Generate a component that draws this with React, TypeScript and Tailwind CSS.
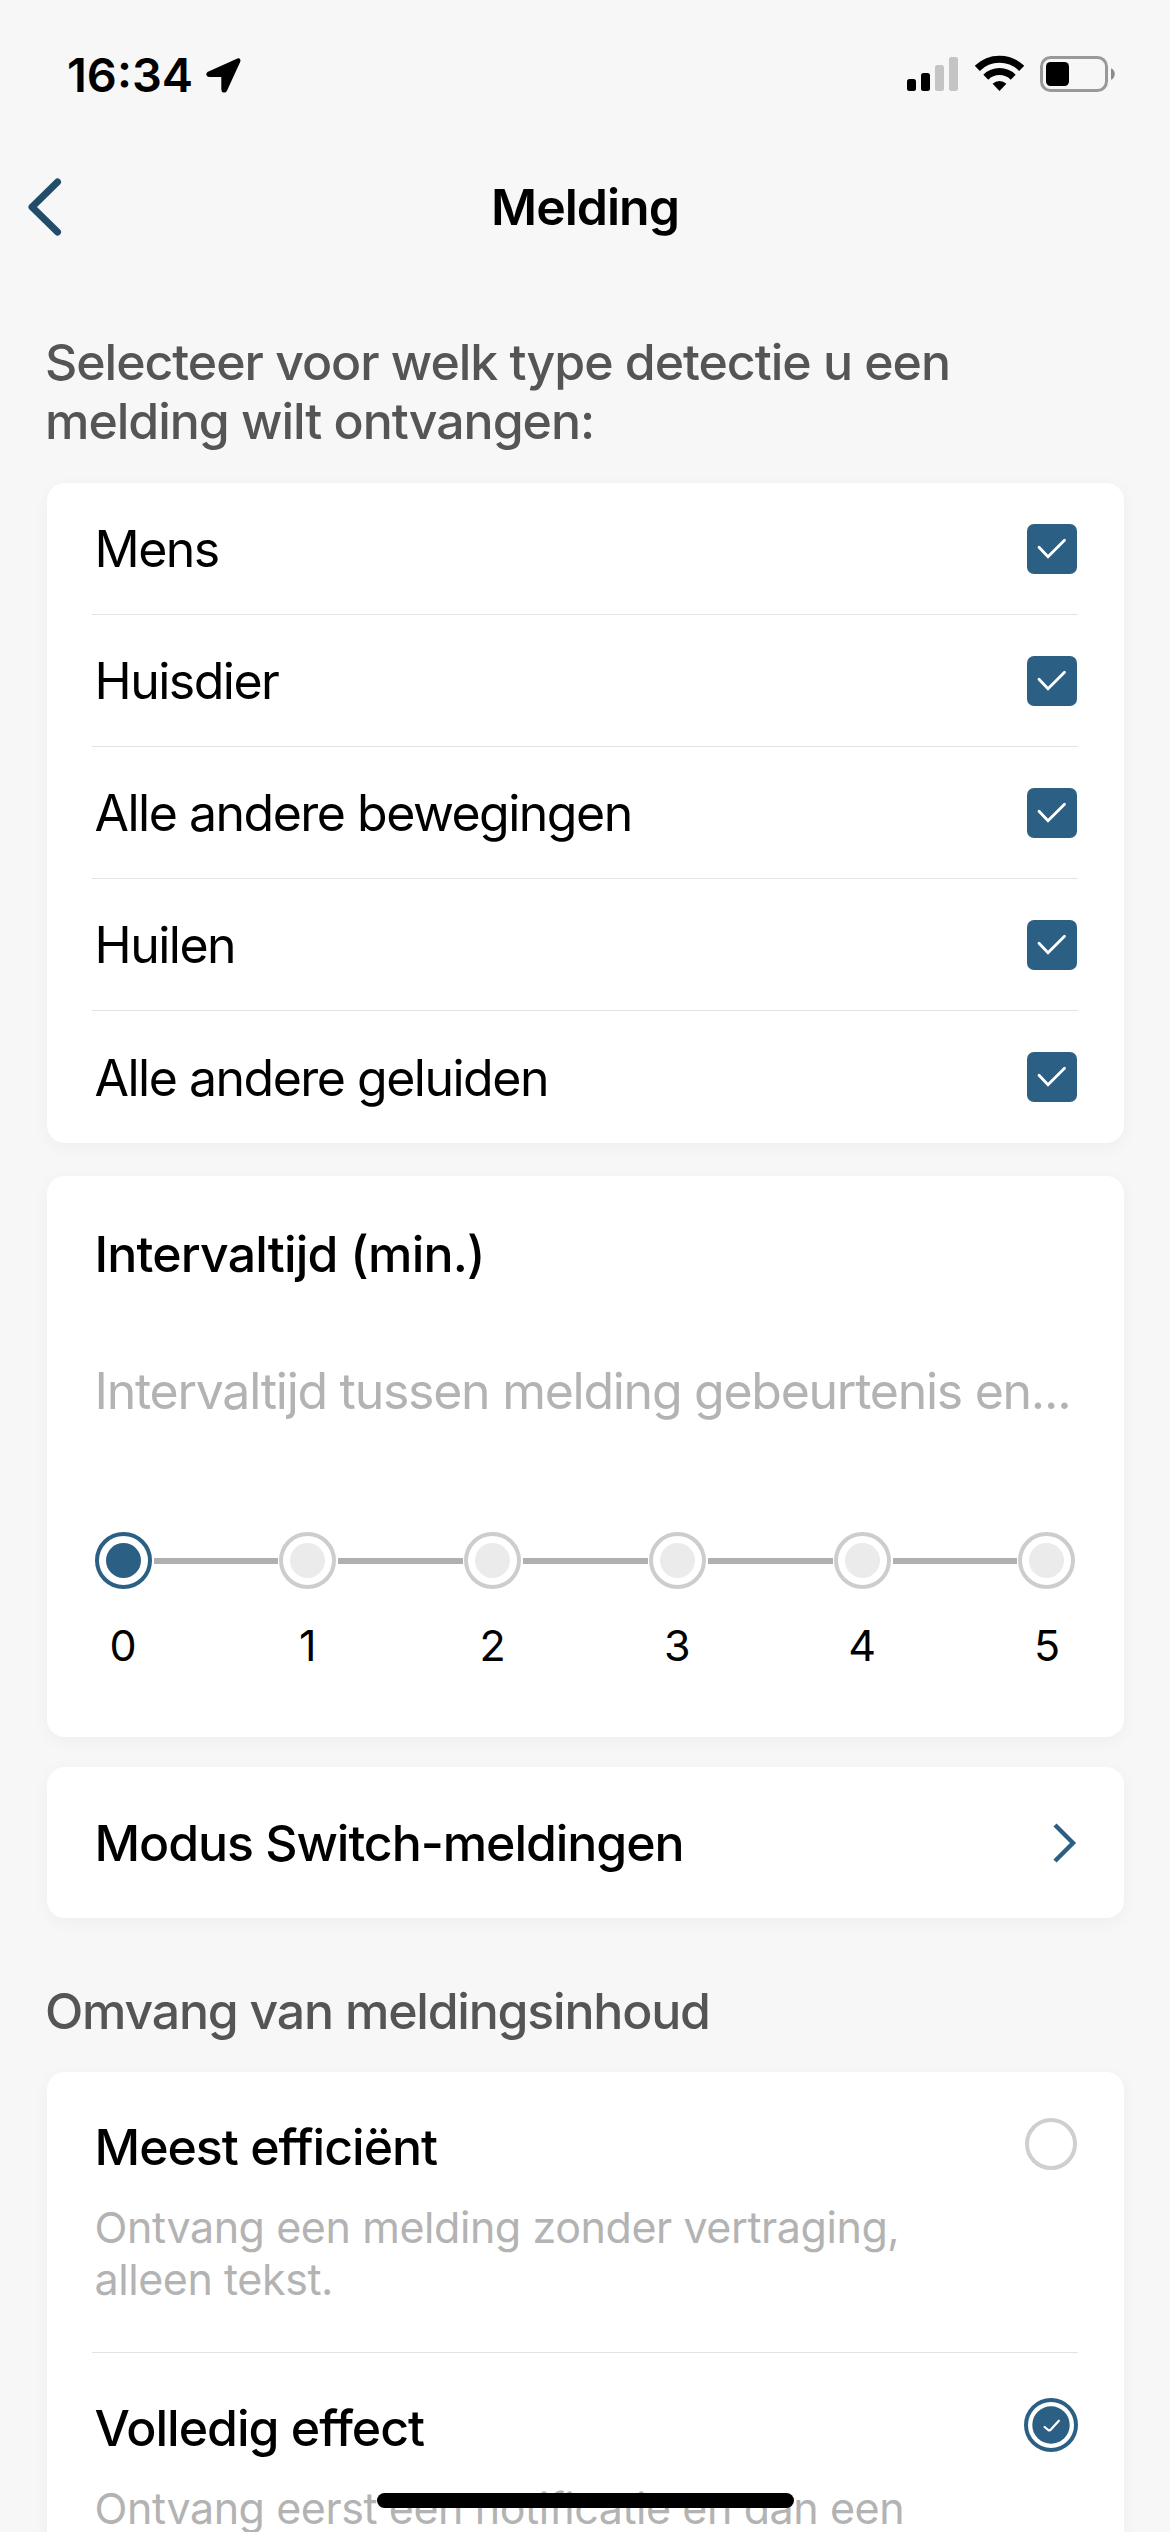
import type { ReactNode } from "react";

const detections = ["Mens", "Huisdier", "Alle andere bewegingen", "Huilen", "Alle andere geluiden"];
const minutes = [0, 1, 2, 3, 4, 5];

function StatusBar() {
    return (
        <div className="flex h-[148px] items-center pl-[67px] pr-[54px]">
            <span className="text-[47px] font-semibold leading-none">16:34</span>
            <svg className="ml-[12px] mt-[2px]" width="37" height="37" viewBox="0 0 37 37">
                <path d="M33 2.9 L3.6 16 C2.2 16.9 2.6 18.5 4 18.5 H17.8 V32.4 C17.8 34.2 19.8 34.6 20.6 33 L33.8 4.3 C34.3 3.1 33.8 2.6 33 2.9 Z" fill="#000" stroke="#000" strokeWidth="3" strokeLinejoin="round" />
            </svg>
            <div className="ml-auto flex items-center">
                <div className="flex h-[34px] items-end gap-[5px]">
                    <div className="h-3 w-[9px] rounded-[2.5px] bg-black" />
                    <div className="h-[18px] w-[9px] rounded-[2.5px] bg-black" />
                    <div className="h-[26px] w-[9px] rounded-[2.5px] bg-[#c4c4c4]" />
                    <div className="h-[34px] w-[9px] rounded-[2.5px] bg-[#c4c4c4]" />
                </div>
                <svg className="-mt-[2px] ml-[17px]" width="49" height="36" viewBox="0 0 49 36">
                    <path d="M2.3 13.4 A31.5 31.5 0 0 1 46.7 13.4" fill="none" stroke="#000" strokeWidth="7.2" />
                    <path d="M10.8 22.2 A19.6 19.6 0 0 1 38.2 22.2" fill="none" stroke="#000" strokeWidth="7" />
                    <path d="M24.5 36 L17.6 28.8 A9.7 9.7 0 0 1 31.4 28.8 Z" fill="#000" />
                </svg>
                <svg className="ml-[16px]" width="76" height="36" viewBox="0 0 76 36">
                    <rect x="1.5" y="1.5" width="65" height="33" rx="9" fill="none" stroke="#999" strokeWidth="3" />
                    <rect x="6" y="6" width="23" height="24" rx="4.5" fill="#000" />
                    <path d="M71 12.2 C76 14 76 22 71 23.8 Z" fill="#8c8c8c" />
                </svg>
            </div>
        </div>
    );
}

function Card({ className, children }: { className: string; children: ReactNode }) {
    return (
        <section className={`mx-[46.5px] rounded-[18px] bg-white shadow-[0_4px_18px_rgba(0,0,0,0.04)] ${className}`}>
            {children}
        </section>
    );
}

function Checkbox() {
    return (
        <span className="flex size-[50px] items-center justify-center rounded-[7px] bg-[#2b5f84]">
            <svg width="50" height="50" viewBox="0 0 50 50" fill="none">
                <path d="M12 23.3 L21 32.8 L37.5 16.2" stroke="#fff" strokeWidth="2.8" strokeLinecap="round" />
            </svg>
        </span>
    );
}

function Radio({ checked }: { checked?: boolean }) {
    if (!checked) {
        return <span className="mr-[1px] mt-[46px] size-[52px] shrink-0 rounded-full border-4 border-[#cfcfcf]" />;
    }
    return (
        <svg className="mt-[45px] shrink-0" width="54" height="54" viewBox="0 0 54 54" fill="none">
            <circle cx="27" cy="27" r="25" stroke="#2b5f84" strokeWidth="4" />
            <circle cx="27" cy="27" r="18.7" fill="#2b5f84" />
            <path d="M20.6 29 L24.2 32 Q25.6 33 26.9 31.6 L34.9 22.7" stroke="#fff" strokeWidth="2.2" strokeLinecap="round" />
        </svg>
    );
}

function Option({ title, checked, className, children }: { title: string; checked?: boolean; className: string; children: ReactNode }) {
    return (
        <div className={`mx-[45.5px] flex h-[281px] justify-between pl-[2.5px] ${className}`}>
            <div className="pt-[45px]">
                <h3 className="text-[50px] font-medium leading-[60px] tracking-[-1px]">{title}</h3>
                <p className="mt-[24px] whitespace-nowrap text-[43px] leading-[52px] tracking-[-0.43px] text-[#b3b3b3]">{children}</p>
            </div>
            <Radio checked={checked} />
        </div>
    );
}

export default function App() {
    return (
        <div className="relative h-[2532px] w-[1170px] overflow-hidden bg-[#f7f7f7] font-['Inter',sans-serif] text-black">
            <StatusBar />

            <header className="grid h-[118px] grid-cols-[1fr_auto_1fr] items-center">
                <svg className="ml-[28px]" width="34" height="58" viewBox="0 0 34 58" fill="none">
                    <path d="M29.5 4 L4 29 L29.5 54" stroke="#214d6b" strokeWidth="7" strokeLinecap="round" strokeLinejoin="round" />
                </svg>
                <h1 className="text-[50px] font-semibold leading-[60px] tracking-[-1px]">Melding</h1>
            </header>

            <h2 className="mb-[32px] mt-[67px] whitespace-nowrap pl-[45px] text-[50px] font-medium leading-[59px] tracking-[-1.03px] text-[#555]">
                Selecteer voor welk type detectie u een
                <br />
                melding wilt ontvangen:
            </h2>

            <Card className="px-[45.5px]">
                {detections.map((name) => (
                    <div key={name} className="flex h-[132px] items-center justify-between border-b border-[#e3e3e3] pl-[2.5px] pr-[1px] last:border-b-0">
                        <span className="pt-[2px] text-[50px] tracking-[-1.5px]">{name}</span>
                        <Checkbox />
                    </div>
                ))}
            </Card>

            <Card className="mt-[33px] h-[561px] px-[48px] pt-[48px]">
                <h3 className="text-[50px] font-medium leading-[60px] tracking-[-0.82px]">Intervaltijd (min.)</h3>
                <p className="mt-[77px] whitespace-nowrap text-[50px] leading-[60px] tracking-[-1.27px] text-[#b3b3b3]">
                    Intervaltijd tussen melding gebeurtenis en...
                </p>
                <div className="mt-[111px] flex items-center">
                    {minutes.map((m) => (
                        <div key={m} className={m === 0 ? "flex items-center" : "flex flex-1 items-center"}>
                            {m > 0 && <div className="ml-[2px] mr-[1px] h-[6px] flex-1 bg-[#b0b0b0]" />}
                            <span className={`flex size-[57px] items-center justify-center rounded-full border-4 ${m === 0 ? "border-[#2b5f84]" : "border-[#cdcdcd]"}`}>
                                <span className={`size-[35px] rounded-full ${m === 0 ? "bg-[#2b5f84]" : "bg-[#ebebeb]"}`} />
                            </span>
                        </div>
                    ))}
                </div>
                <div className="mt-[31px] flex justify-between">
                    {minutes.map((m) => (
                        <span key={m} className="w-[57px] text-center text-[43px] leading-[50px]">{m}</span>
                    ))}
                </div>
            </Card>

            <Card className="mt-[30px] flex h-[151px] items-center justify-between pl-[48px] pr-[47px]">
                <h3 className="text-[50px] font-medium leading-[60px] tracking-[-1.06px]">Modus Switch-meldingen</h3>
                <svg width="26" height="42" viewBox="0 0 26 42" fill="none">
                    <path d="M4 3 L22 21 L4 39" stroke="#2b5f84" strokeWidth="4.4" />
                </svg>
            </Card>

            <h2 className="mb-[31px] mt-[63px] pl-[45px] text-[50px] font-medium leading-[60px] tracking-[-1.22px] text-[#555]">
                Omvang van meldingsinhoud
            </h2>

            <Card className="">
                <Option title="Meest efficiënt" className="border-b border-[#e3e3e3]">
                    Ontvang een melding zonder vertraging,
                    <br />
                    alleen tekst.
                </Option>
                <Option title="Volledig effect" className="" checked>
                    Ontvang eerst een notificatie en dan een
                </Option>
            </Card>

            {/* home indicator */}
            <div className="absolute left-[377px] top-[2493px] h-[15px] w-[417px] rounded-full bg-black" />
        </div>
    );
}
